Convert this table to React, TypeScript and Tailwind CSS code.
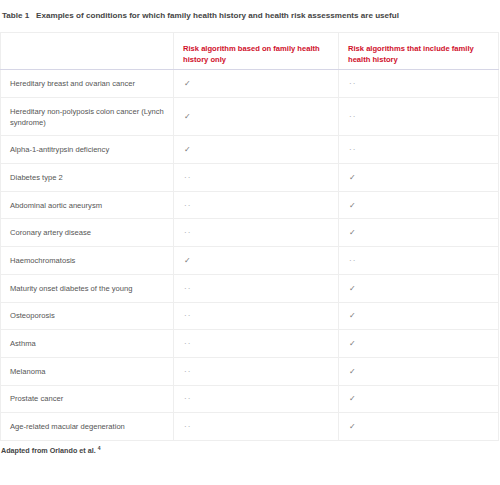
import React from "react";

type Row = { name: string; family: boolean; include: boolean };

const rows: Row[] = [
    { name: "Hereditary breast and ovarian cancer", family: true, include: false },
    { name: "Hereditary non-polyposis colon cancer (Lynch syndrome)", family: true, include: false },
    { name: "Alpha-1-antitrypsin deficiency", family: true, include: false },
    { name: "Diabetes type 2", family: false, include: true },
    { name: "Abdominal aortic aneurysm", family: false, include: true },
    { name: "Coronary artery disease", family: false, include: true },
    { name: "Haemochromatosis", family: true, include: false },
    { name: "Maturity onset diabetes of the young", family: false, include: true },
    { name: "Osteoporosis", family: false, include: true },
    { name: "Asthma", family: false, include: true },
    { name: "Melanoma", family: false, include: true },
    { name: "Prostate cancer", family: false, include: true },
    { name: "Age-related macular degeneration", family: false, include: true },
];

function Mark({ yes }: { yes: boolean }) {
    if (yes) {
        return <span className="text-[7.5px] text-[#777]">✓</span>;
    }
    return <span className="text-[8px] tracking-[1px] text-[#999]">··</span>;
}

export default function App() {
    return (
        <div className="w-[500px] h-[485px] bg-white font-['Liberation_Sans',Arial,sans-serif]">
            <div className="pl-[2px] pt-[10px] h-[32px] text-[8.1px] font-bold text-[#444] leading-[11px]">
                Table 1&nbsp;&nbsp;&nbsp;Examples of conditions for which family health history and health risk assessments are useful
            </div>

            <table className="w-[499px] border-collapse table-fixed text-[7.6px] leading-[11px]">
                <colgroup>
                    <col className="w-[173px]"/>
                    <col className="w-[165px]"/>
                    <col/>
                </colgroup>
                <thead>
                    <tr>
                        <th className="border border-[#eeeeee] border-b-[#d6d6e6]"></th>
                        <th className="border border-[#eeeeee] border-b-[#d6d6e6] pl-[9px] pr-[8px] pt-[10px] pb-[4px] text-left align-top text-[7.6px] font-bold text-[#d0102b]">
                            Risk algorithm based on family health history only
                        </th>
                        <th className="border border-[#eeeeee] border-b-[#d6d6e6] pl-[9px] pr-[8px] pt-[10px] pb-[4px] text-left align-top text-[7.6px] font-bold text-[#d0102b]">
                            Risk algorithms that include family health history
                        </th>
                    </tr>
                </thead>
                <tbody>
                    {rows.map((r) => (
                        <tr key={r.name}>
                            <td className="border border-[#eeeeee] pl-[9px] pr-[2px] py-[7.85px] align-middle text-[#555]">
                                {r.name}
                            </td>
                            <td className="border border-[#eeeeee] pl-[10px] py-[7.85px] align-middle">
                                <Mark yes={r.family}/>
                            </td>
                            <td className="border border-[#eeeeee] pl-[10px] py-[7.85px] align-middle">
                                <Mark yes={r.include}/>
                            </td>
                        </tr>
                    ))}
                </tbody>
            </table>

            <div className="pl-[1px] pt-[5px] text-[7.2px] font-bold text-[#444] leading-[10px]">
                Adapted from Orlando et al. <sup className="text-[5px]">4</sup>
            </div>
        </div>
    );
}
